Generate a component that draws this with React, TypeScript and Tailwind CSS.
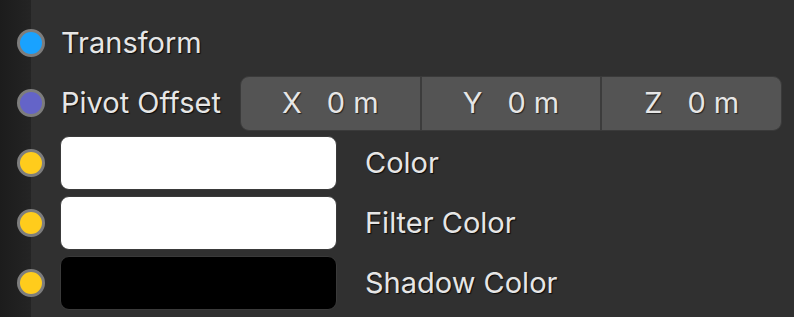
const Socket = ({ color }: { color: string }) => (
  <div className={`h-[28px] w-[28px] shrink-0 rounded-full border-[3px] border-[#7d7d7d] ${color}`} />
);

const Label = ({ children }: { children: React.ReactNode }) => (
  <span className="text-[29px] leading-none text-[#e6e6e6] [text-shadow:1px_1px_1px_rgba(0,0,0,0.8)]">
    {children}
  </span>
);

const Axis = ({ axis, last }: { axis: string; last?: boolean }) => (
  <div
    className={`flex flex-1 items-center justify-center gap-[25px] ${
      last ? '' : 'border-r-2 border-[#3c3c3c]'
    }`}
  >
    <span>{axis}</span>
    <span>0 m</span>
  </div>
);

const ColorRow = ({ swatch, name }: { swatch: string; name: string }) => (
  <div className="flex h-[60px] items-center">
    <Socket color="bg-[#ffcc1c]" />
    <div
      className={`ml-[15px] h-[54px] w-[277px] rounded-[9px] border border-[#3a3a3a] ${swatch}`}
    />
    <div className="ml-[28px]">
      <Label>{name}</Label>
    </div>
  </div>
);

export default function App() {
  return (
    <div
      className="relative h-[317px] w-[794px] overflow-hidden bg-[#303030]"
      style={{ fontFamily: 'Inter, "Noto Sans", sans-serif' }}
    >
      <div className="absolute inset-y-0 left-0 w-[31px] bg-gradient-to-r from-[#1c1c1c] to-[#242424]" />
      <div className="relative flex flex-col pl-[17px] pt-[13px]">
        <div className="flex h-[60px] items-center">
          <Socket color="bg-[#19a2ff]" />
          <div className="ml-[16px]">
            <Label>Transform</Label>
          </div>
        </div>
        <div className="flex h-[60px] items-center">
          <Socket color="bg-[#6464c8]" />
          <div className="ml-[16px] w-[179px]">
            <Label>Pivot Offset</Label>
          </div>
          <div className="flex h-[55px] w-[542px] rounded-[9px] border border-[#3a3a3a] bg-[#545454] text-[29px] text-[#e6e6e6] [text-shadow:1px_1px_1px_rgba(0,0,0,0.6)]">
            <Axis axis="X" />
            <Axis axis="Y" />
            <Axis axis="Z" last />
          </div>
        </div>
        <ColorRow swatch="bg-white" name="Color" />
        <ColorRow swatch="bg-white" name="Filter Color" />
        <ColorRow swatch="bg-black" name="Shadow Color" />
      </div>
    </div>
  );
}
